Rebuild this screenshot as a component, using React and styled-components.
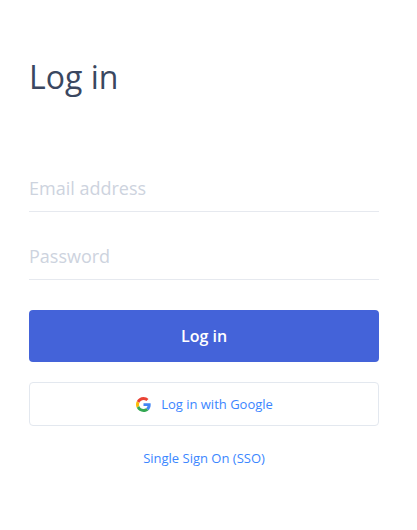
import styled, { createGlobalStyle } from 'styled-components';

const GlobalStyle = createGlobalStyle`
  html, body {
    margin: 0;
    padding: 0;
    background: #fff;
    font-family: "Open Sans", sans-serif;
  }
`;

const Page = styled.div`
  box-sizing: border-box;
  width: 417px;
  height: 530px;
  padding: 55px 38px 0 29px;
`;

const Title = styled.h1`
  margin: 0 0 67px;
  font-size: 32px;
  line-height: 44px;
  font-weight: 400;
  color: #3a4760;
`;

const Form = styled.form`
  display: flex;
  flex-direction: column;
`;

const Field = styled.input`
  box-sizing: border-box;
  width: 100%;
  height: 46px;
  margin-bottom: 22px;
  padding: 0 0 2px;
  border: none;
  border-bottom: 1px solid #e6e9ef;
  outline: none;
  background: transparent;
  font-family: inherit;
  font-size: 18px;
  color: #3a4760;

  &::placeholder {
    color: #cdd3de;
    opacity: 1;
  }
`;

const SubmitButton = styled.button`
  height: 52px;
  margin-top: 8px;
  border: none;
  border-radius: 4px;
  background: #4463d9;
  color: #fff;
  font-family: inherit;
  font-size: 16px;
  font-weight: 600;
`;

const GoogleButton = styled.button`
  display: flex;
  align-items: center;
  justify-content: center;
  gap: 10px;
  height: 44px;
  margin-top: 20px;
  padding: 0 6px 0 7px;
  border: 1px solid #e3e8ef;
  border-radius: 4px;
  background: #fff;
  color: #3b86ff;
  font-family: inherit;
  font-size: 13px;
`;

const SsoLink = styled.a`
  display: block;
  margin-top: 23px;
  text-align: center;
  font-size: 13px;
  line-height: 18px;
  color: #3b86ff;
  text-decoration: none;
`;

const GoogleIcon = () => (
  <svg width="15" height="15" viewBox="0 0 48 48">
    <path fill="#EA4335" d="M24 9.5c3.54 0 6.71 1.22 9.21 3.6l6.85-6.85C35.9 2.38 30.47 0 24 0 14.62 0 6.51 5.38 2.56 13.22l7.98 6.19C12.43 13.72 17.74 9.5 24 9.5z" />
    <path fill="#4285F4" d="M46.98 24.55c0-1.57-.15-3.09-.38-4.55H24v9.02h12.94c-.58 2.96-2.26 5.48-4.78 7.18l7.73 6c4.51-4.18 7.09-10.36 7.09-17.65z" />
    <path fill="#FBBC05" d="M10.53 28.59c-.48-1.45-.76-2.99-.76-4.59s.27-3.14.76-4.59l-7.98-6.19C.92 16.46 0 20.12 0 24c0 3.88.92 7.54 2.56 10.78l7.97-6.19z" />
    <path fill="#34A853" d="M24 48c6.48 0 11.93-2.13 15.89-5.81l-7.73-6c-2.15 1.45-4.92 2.3-8.16 2.3-6.26 0-11.57-4.22-13.47-9.91l-7.98 6.19C6.51 42.62 14.62 48 24 48z" />
  </svg>
);

export default function App() {
  return (
    <Page>
      <GlobalStyle />
      <Title>Log in</Title>
      <Form>
        <Field type="email" placeholder="Email address" />
        <Field type="password" placeholder="Password" />
        <SubmitButton type="button">Log in</SubmitButton>
        <GoogleButton type="button">
          <GoogleIcon />
          Log in with Google
        </GoogleButton>
        <SsoLink href="#">Single Sign On (SSO)</SsoLink>
      </Form>
    </Page>
  );
}
